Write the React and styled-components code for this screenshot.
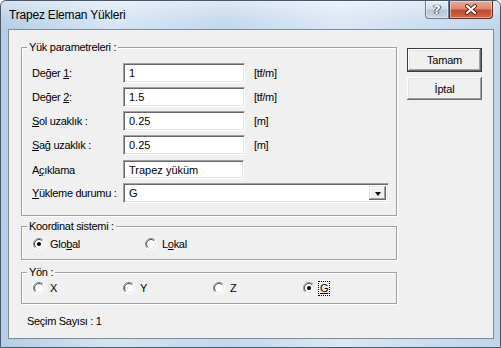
import styled, { createGlobalStyle } from 'styled-components';

const Global = createGlobalStyle`
  html, body { margin: 0; padding: 0; background: #fff; }
  body { font-family: "Liberation Sans", Arial, sans-serif; }
`;

const Frame = styled.div`
  width: 501px;
  height: 348px;
  box-sizing: border-box;
  display: flex;
  flex-direction: column;
  border: 1px solid #4b5867;
  border-radius: 6px 6px 0 0;
  background: linear-gradient(90deg, #b4cde6 0%, #d6e5f3 22%, #c2d8ee 45%, #dbe8f5 68%, #bfd5eb 100%);
  overflow: hidden;
`;

const TitleBar = styled.div`
  height: 28px;
  display: flex;
  align-items: flex-start;
  flex-shrink: 0;
  background: linear-gradient(180deg, rgba(255,255,255,0.45) 0%, rgba(255,255,255,0.1) 60%, rgba(255,255,255,0) 100%);
`;

const Title = styled.div`
  align-self: center;
  padding-left: 8px;
  font-size: 12px;
  letter-spacing: -0.2px;
  color: #000;
  line-height: 28px;
`;

const Caption = styled.div`
  margin-left: auto;
  margin-right: 7px;
  display: flex;
`;

const CapButton = styled.div`
  width: ${p => p.$w}px;
  height: 18px;
  box-sizing: border-box;
  display: flex;
  align-items: center;
  justify-content: center;
  border: 1px solid ${p => (p.$close ? '#6a2a1e' : '#6b7c8e')};
  border-top: none;
  border-radius: ${p => (p.$close ? '0 0 4px 0' : '0 0 0 4px')};
  background: ${p =>
    p.$close
      ? 'linear-gradient(180deg, #e9aa9a 0%, #d98a76 45%, #c44a31 55%, #d0664a 100%)'
      : 'linear-gradient(180deg, #e8eef5 0%, #d3dde8 45%, #b6c6d7 55%, #c9d6e3 100%)'};
  box-shadow: inset 0 0 0 1px rgba(255,255,255,0.45);
`;

const Help = styled.span`
  font: bold 13px "DejaVu Sans", sans-serif;
  color: #fff;
  text-shadow: 0 0 1px #3a4a5a, 0 0 1px #3a4a5a, 1px 0 0 #4a5a6a, -1px 0 0 #4a5a6a;
  line-height: 1;
`;

const Client = styled.div`
  margin: 0 6px 0 7px;
  height: 310px;
  box-sizing: border-box;
  background: #f0f0f0;
  border: 1px solid #7d8b98;
  display: flex;
  gap: 10px;
  padding: 17px 11px 0 12px;
  font-size: 11px;
  letter-spacing: -0.3px;
  color: #000;
`;

const LeftCol = styled.div`
  width: 376px;
  display: flex;
  flex-direction: column;
`;

const RightCol = styled.div`
  width: 75px;
  display: flex;
  flex-direction: column;
  gap: 5px;
  padding-top: 1px;
`;

const Group = styled.div`
  box-sizing: border-box;
  height: ${p => p.$h}px;
  margin-top: ${p => p.$mt || 0}px;
  border: 1px solid #a0a0a0;
  box-shadow: inset 1px 1px 0 #fff, 1px 1px 0 #fff;
  display: flex;
  flex-direction: column;
`;

const Legend = styled.div`
  width: fit-content;
  margin: -8px 0 0 5px;
  padding: 0 2px;
  line-height: 14px;
  height: 14px;
  background: #f0f0f0;
`;

const Params = styled.div`
  padding: 9px 0 0 10px;
  display: flex;
  flex-direction: column;
`;

const Row = styled.div`
  display: flex;
  align-items: center;
  height: ${p => p.$h}px;
  margin-top: ${p => p.$mt || 0}px;
`;

const Label = styled.div`
  width: 91px;
  flex-shrink: 0;
`;

const U = styled.span`
  text-decoration: underline;
`;

const Field = styled.input`
  box-sizing: border-box;
  width: ${p => p.$w}px;
  height: 100%;
  margin: 0;
  padding: 0 0 0 5px;
  font: 11px "Liberation Sans", Arial, sans-serif;
  letter-spacing: 0;
  color: #000;
  background: #fff;
  border-style: solid;
  border-width: 1px;
  border-color: #a0a0a0 #fff #fff #a0a0a0;
  box-shadow: inset 1px 1px 0 #696969, inset -1px -1px 0 #e3e3e3;
  outline: none;
`;

const Unit = styled.div`
  margin-left: 9px;
`;

const Combo = styled.div`
  box-sizing: border-box;
  width: 266px;
  height: 100%;
  display: flex;
  align-items: center;
  background: #fff;
  border-style: solid;
  border-width: 1px;
  border-color: #a0a0a0 #fff #fff #a0a0a0;
  box-shadow: inset 1px 1px 0 #696969, inset -1px -1px 0 #e3e3e3;
  padding: 2px 2px 2px 5px;
`;

const ComboText = styled.div`
  flex: 1;
  letter-spacing: 0;
`;

const DropButton = styled.div`
  width: 17px;
  height: 100%;
  box-sizing: border-box;
  display: flex;
  align-items: center;
  justify-content: center;
  background: #f0f0f0;
  box-shadow: inset -1px -1px 0 #696969, inset 1px 1px 0 #e3e3e3, inset -2px -2px 0 #a0a0a0, inset 2px 2px 0 #fff;
`;

const Arrow = styled.div`
  width: 0;
  height: 0;
  border-left: 3.5px solid transparent;
  border-right: 3.5px solid transparent;
  border-top: 4px solid #000;
  margin-top: 1px;
`;

const RadioRow = styled.div`
  display: flex;
  align-items: center;
  height: 16px;
  padding: ${p => p.$pt}px 0 0 11px;
`;

const RadioItem = styled.div`
  width: ${p => p.$w}px;
  display: flex;
  align-items: center;
  gap: 4px;
  flex-shrink: 0;
`;

const RadioText = styled.span`
  line-height: 13px;
  outline: ${p => (p.$focus ? '1px dotted #000' : 'none')};
  outline-offset: 0;
  padding: 0 1px;
`;

const Count = styled.div`
  margin-top: 10px;
  padding-left: 6px;
  line-height: 14px;
`;

const PushButton = styled.button`
  width: 75px;
  height: ${p => (p.$default ? 24 : 23)}px;
  margin: 0;
  padding: 0;
  font: 11px "Liberation Sans", Arial, sans-serif;
  letter-spacing: -0.2px;
  color: #000;
  background: #f0f0f0;
  border: ${p => (p.$default ? '1px solid #3c3c3c' : 'none')};
  box-shadow: inset -1px -1px 0 #696969, inset 1px 1px 0 #fff, inset -2px -2px 0 #a0a0a0, inset 2px 2px 0 #e3e3e3;
`;

function Radio({ checked }) {
  return (
    <svg width="12" height="12" viewBox="0 0 12 12">
      <circle cx="6" cy="6" r="5.5" fill="#fff" />
      <path d="M2.1 9.9 A5.5 5.5 0 0 1 9.9 2.1" stroke="#8a8a8a" fill="none" />
      <path d="M2.8 9.2 A4.5 4.5 0 0 1 9.2 2.8" stroke="#505050" fill="none" />
      <path d="M9.9 2.1 A5.5 5.5 0 0 1 2.1 9.9" stroke="#fff" fill="none" />
      <path d="M9.2 2.8 A4.5 4.5 0 0 1 2.8 9.2" stroke="#e3e3e3" fill="none" />
      {checked && <circle cx="6" cy="6" r="2" fill="#000" />}
    </svg>
  );
}

function CloseGlyph() {
  return (
    <svg width="14" height="11" viewBox="0 0 14 11">
      <path d="M3 2 L11 9 M11 2 L3 9" stroke="#5a2418" strokeWidth="4" strokeLinecap="round" />
      <path d="M3 2 L11 9 M11 2 L3 9" stroke="#fff" strokeWidth="2.2" strokeLinecap="round" />
    </svg>
  );
}

const fields = [
  { label: <>Değer <U>1</U>:</>, value: '1', unit: '[tf/m]' },
  { label: <>Değer <U>2</U>:</>, value: '1.5', unit: '[tf/m]' },
  { label: <><U>S</U>ol uzaklık :</>, value: '0.25', unit: '[m]' },
  { label: <><U>S</U>ağ uzaklık :</>, value: '0.25', unit: '[m]' },
];

const directions = [
  { text: 'X' },
  { text: 'Y' },
  { text: 'Z' },
  { text: 'G', checked: true },
];

export default function App() {
  return (
    <>
      <Global />
      <Frame>
        <TitleBar>
          <Title>Trapez Eleman Yükleri</Title>
          <Caption>
            <CapButton $w={24}><Help>?</Help></CapButton>
            <CapButton $w={44} $close><CloseGlyph /></CapButton>
          </Caption>
        </TitleBar>
        <Client>
          <LeftCol>
            <Group $h={169}>
              <Legend>Yük parametreleri :</Legend>
              <Params>
                {fields.map((f, i) => (
                  <Row key={i} $h={20} $mt={i ? 4 : 0}>
                    <Label>{f.label}</Label>
                    <Field $w={122} readOnly value={f.value} />
                    <Unit>{f.unit}</Unit>
                  </Row>
                ))}
                <Row $h={19} $mt={5}>
                  <Label>A<U>ç</U>ıklama</Label>
                  <Field $w={121} readOnly value="Trapez yüküm" />
                </Row>
                <Row $h={20} $mt={4}>
                  <Label><U>Y</U>ükleme durumu :</Label>
                  <Combo>
                    <ComboText>G</ComboText>
                    <DropButton><Arrow /></DropButton>
                  </Combo>
                </Row>
              </Params>
            </Group>
            <Group $h={34} $mt={10}>
              <Legend>Koordinat sistemi :</Legend>
              <RadioRow $pt={3}>
                <RadioItem $w={112}>
                  <Radio checked />
                  <RadioText>Glo<U>b</U>al</RadioText>
                </RadioItem>
                <RadioItem $w={112}>
                  <Radio />
                  <RadioText>L<U>o</U>kal</RadioText>
                </RadioItem>
              </RadioRow>
            </Group>
            <Group $h={32} $mt={12}>
              <Legend>Yön :</Legend>
              <RadioRow $pt={1}>
                {directions.map(d => (
                  <RadioItem key={d.text} $w={90}>
                    <Radio checked={d.checked} />
                    <RadioText $focus={d.checked}>
                      {d.checked ? <U>{d.text}</U> : d.text}
                    </RadioText>
                  </RadioItem>
                ))}
              </RadioRow>
            </Group>
            <Count>Seçim Sayısı : 1</Count>
          </LeftCol>
          <RightCol>
            <PushButton $default>Tamam</PushButton>
            <PushButton>İptal</PushButton>
          </RightCol>
        </Client>
      </Frame>
    </>
  );
}
